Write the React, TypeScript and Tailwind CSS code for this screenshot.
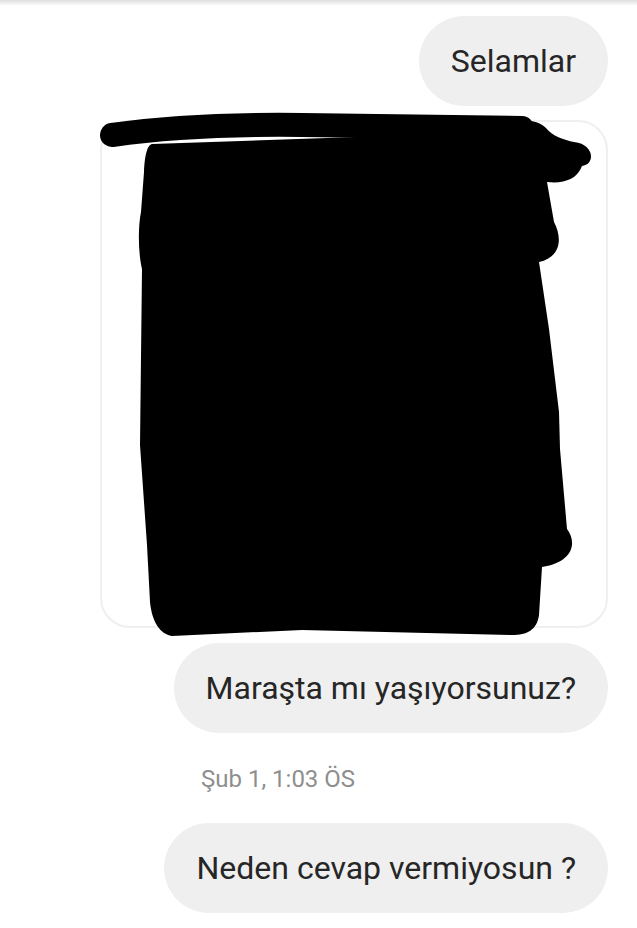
import React from 'react';

const Bubble = ({ text, className = '' }: { text: string; className?: string }) => (
  <div
    className={`h-[90px] flex items-center rounded-full bg-[#efefef] px-8 text-[32px] leading-none text-[#262626] ${className}`}
  >
    {text}
  </div>
);

// black marker scribble drawn over the shared post
const Scribble = () => (
  <svg
    className="absolute left-0 top-0 w-[508px] h-[508px] overflow-visible"
    viewBox="0 0 508 508"
  >
    <path
      d="M 10 13 C 60 6, 120 2, 200 3 L 420 6"
      stroke="#000"
      strokeWidth="24"
      strokeLinecap="round"
      fill="none"
    />
    <path
      fill="#000"
      d="M 50 22 L 400 10 C 408 -2, 432 -6, 444 6 C 450 14, 462 18, 472 20 C 492 22, 494 42, 480 44 C 475 58, 460 62, 445 60 L 452 100 C 460 115, 460 135, 437 140 L 447 207 L 457 290 L 458 327 L 465 407 C 475 420, 472 440, 440 445 L 437 493 C 435 508, 425 513, 410 513 L 200 508 L 70 514 C 58 512, 50 500, 48 480 L 45 423 L 38 323 L 40 147 C 36 130, 36 105, 39 90 L 42 50 C 43 30, 46 23, 50 22 Z"
    />
  </svg>
);

export default function App() {
  return (
    <div className="w-[637px] h-[928px] bg-white overflow-hidden font-['Roboto',sans-serif]">
      <div className="h-[6px] bg-gradient-to-b from-[#dedede] to-white" />
      <div className="flex flex-col items-end pr-[29px] pt-[10px]">
        <Bubble text="Selamlar" />

        <div className="relative mt-[14px] w-[508px] h-[508px] rounded-[30px] border-2 border-[#efefef]">
          <Scribble />
        </div>

        <Bubble text="Maraşta mı yaşıyorsunuz?" className="mt-[15px]" />

        <div className="self-stretch pl-[201px] mt-[34px] h-[24px] flex items-center text-[24px] leading-none text-[#8e8e8e]">
          Şub 1, 1:03 ÖS
        </div>

        <Bubble text="Neden cevap vermiyosun ?" className="mt-[32px]" />
      </div>
    </div>
  );
}
